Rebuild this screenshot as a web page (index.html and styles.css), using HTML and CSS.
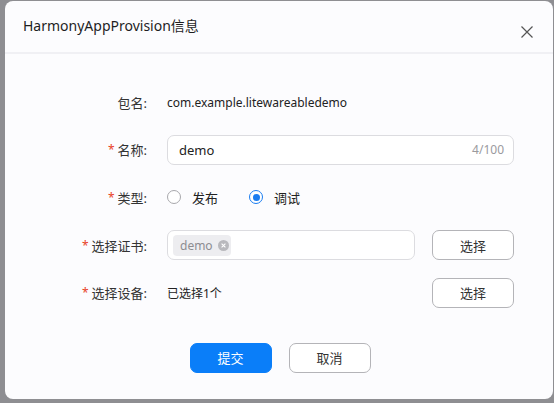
FILE: index.html
```html
<!DOCTYPE html>
<html lang="zh">
<head>
<meta charset="utf-8">
<link rel="stylesheet" href="styles.css">
</head>
<body>
<div class="dialog">
  <div class="header">
    <div class="title">HarmonyAppProvision信息</div>
    <svg class="close" width="12" height="12" viewBox="0 0 12 12"><path d="M0.5 0.5L11.5 11.5M11.5 0.5L0.5 11.5" stroke="#555" stroke-width="1.2" fill="none"/></svg>
  </div>
  <div class="form">
    <div class="label">包名:</div>
    <div class="value">com.example.litewareabledemo</div>

    <div class="label"><span class="req">*</span>名称:</div>
    <div class="input wide"><span class="input-text">demo</span><span class="count">4/100</span></div>

    <div class="label"><span class="req">*</span>类型:</div>
    <div class="radios">
      <label class="radio"><span class="dot"></span>发布</label>
      <label class="radio checked"><span class="dot"></span>调试</label>
    </div>

    <div class="label"><span class="req">*</span>选择证书:</div>
    <div class="with-btn">
      <div class="input"><span class="tag">demo<span class="tag-x"><svg width="11" height="11" viewBox="0 0 11 11"><circle cx="5.5" cy="5.5" r="5.5" fill="#b9b9bd"/><path d="M3.6 3.6L7.4 7.4M7.4 3.6L3.6 7.4" stroke="#fff" stroke-width="1.1"/></svg></span></span></div>
      <button class="btn">选择</button>
    </div>

    <div class="label"><span class="req">*</span>选择设备:</div>
    <div class="with-btn">
      <div class="value">已选择1个</div>
      <button class="btn">选择</button>
    </div>
  </div>
  <div class="footer">
    <button class="btn primary">提交</button>
    <button class="btn">取消</button>
  </div>
</div>
</body>
</html>
```
FILE: styles.css
```css
html, body {
  margin: 0;
  padding: 0;
}
body {
  background: #8e8e92;
  width: 554px;
  height: 403px;
  overflow: hidden;
  font-family: "Noto Sans", "Noto Sans CJK SC", sans-serif;
  color: #222;
}
.dialog {
  margin: 1px 0 0 5px;
  width: 548px;
  height: 398px;
  background: #fcfcfe;
  border-radius: 8px;
  box-sizing: border-box;
  display: flex;
  flex-direction: column;
}
.header {
  height: 51px;
  border-bottom: 2px solid #f0f0f4;
  display: flex;
  align-items: center;
  justify-content: space-between;
  padding: 0 20px 0 18px;
  box-sizing: content-box;
}
.title {
  font-size: 14px;
  color: #1e1e1e;
  margin-top: -3px;
}
.close {
  margin-top: 10px;
}
.form {
  margin-top: 33px;
  display: grid;
  grid-template-columns: 142px 1fr;
  column-gap: 20px;
  row-gap: 17.7px;
  padding-right: 39px;
  font-size: 13px;
}
.label {
  height: 30px;
  display: flex;
  align-items: center;
  justify-content: flex-end;
  color: #333;
}
.req {
  color: #e84026;
  margin-right: 3px;
  font-size: 12px;
}
.value {
  height: 30px;
  display: flex;
  align-items: center;
  color: #222;
  flex: 1;
  font-size: 12px;
}
.input {
  height: 30px;
  box-sizing: border-box;
  border: 1px solid #dcdce0;
  border-radius: 7px;
  background: #fff;
  display: flex;
  align-items: center;
  padding: 0 9px 0 11px;
  flex: 1;
}
.input-text {
  flex: 1;
  font-size: 13px;
}
.count {
  font-size: 12px;
  color: #9a9a9e;
}
.radios {
  height: 30px;
  display: flex;
  align-items: center;
  gap: 31px;
}
.radio {
  display: flex;
  align-items: center;
  gap: 11px;
}
.dot {
  width: 14px;
  height: 14px;
  box-sizing: border-box;
  border: 1px solid #a8a8ac;
  border-radius: 50%;
  background: #fff;
  display: flex;
  align-items: center;
  justify-content: center;
}
.checked .dot {
  border: 1.5px solid #1a7cf0;
}
.checked .dot::after {
  content: "";
  width: 7px;
  height: 7px;
  border-radius: 50%;
  background: #1a7cf0;
}
.with-btn {
  display: flex;
  gap: 17px;
  align-items: center;
}
.input .tag {
  margin-left: -6px;
}
.tag {
  height: 21px;
  background: #ededf0;
  border-radius: 4px;
  display: flex;
  align-items: center;
  padding: 0 2px 0 7px;
  gap: 5px;
  color: #8c8c90;
  font-size: 12px;
}
.tag-x {
  display: flex;
}
.btn {
  width: 82px;
  height: 30px;
  box-sizing: border-box;
  border: 1px solid #b4b4b8;
  border-radius: 7px;
  background: #fff;
  font-family: "Noto Sans", "Noto Sans CJK SC", sans-serif;
  font-size: 13px;
  color: #333;
  padding: 0;
}
.footer {
  margin-top: 35px;
  display: flex;
  justify-content: center;
  gap: 17px;
  padding-left: 2px;
}
.btn.primary {
  background: #0a7ef9;
  border-color: #0a7ef9;
  color: #fff;
}
```
